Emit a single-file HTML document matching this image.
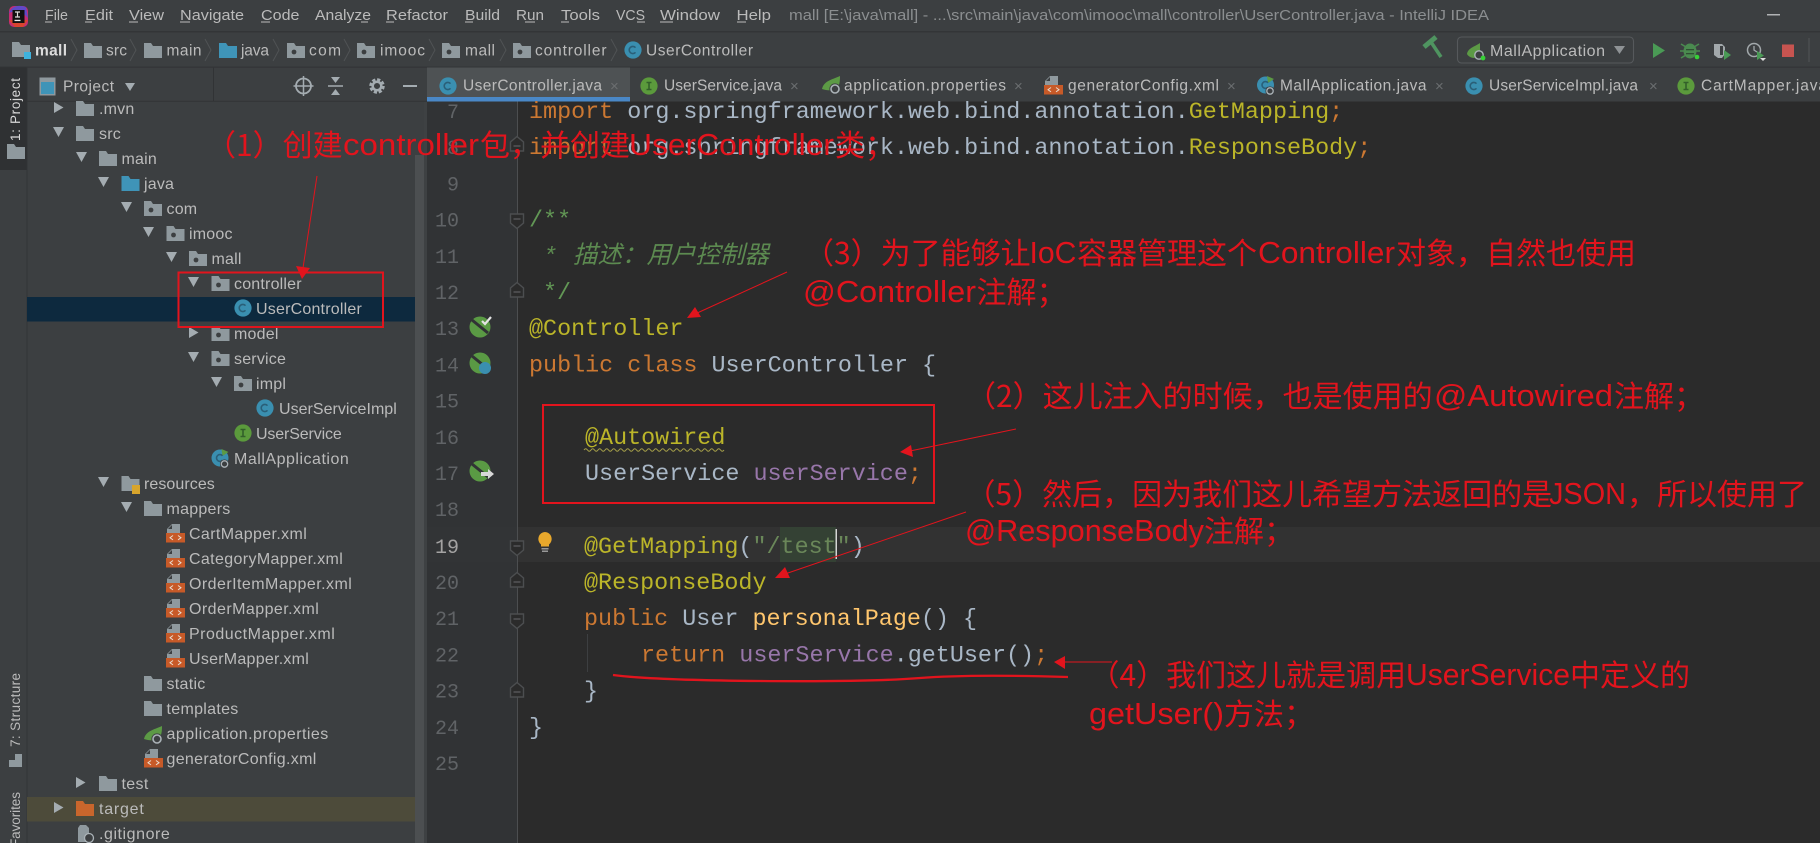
<!DOCTYPE html>
<html lang="zh"><head><meta charset="utf-8"><title>UserController.java - IntelliJ IDEA</title>
<style>
html,body{margin:0;padding:0;background:#2b2b2b;width:1820px;height:843px;overflow:hidden}
svg{display:block;filter:blur(.35px)}
text{white-space:pre}
.ui{font-family:"Liberation Sans",sans-serif;fill:#bbbbbb}
.m{font-size:15px}
.t{font-size:16px;letter-spacing:.2px}
.tab{font-size:15.5px}
.code{font-family:"Liberation Mono",monospace;font-size:23.4px;fill:#a9b7c6}
.ln{font-family:"Liberation Mono",monospace;font-size:20px;fill:#606366;text-anchor:end}
.k{fill:#cc7832}.a{fill:#bbb529}.c{fill:#629755}.s{fill:#6a8759}.f{fill:#9876aa}.h{fill:#ffc66d}
.r{font-family:"Noto Sans CJK SC","Liberation Sans",sans-serif;font-size:30px;fill:#e2141d}
.l{font-family:"Liberation Sans",sans-serif;font-size:31px;fill:#e2141d}
.x{font-size:15px;fill:#6b6e70}
</style></head><body>
<svg width="1820" height="843" viewBox="0 0 1820 843" xmlns="http://www.w3.org/2000/svg">
<defs>
<g id="fd"><path d="M0 1h7l2 3h9v12H0z" fill="#8f999e"/></g>
<g id="pk"><path d="M0 1h7l2 3h9v12H0z" fill="#8f999e"/><circle cx="7" cy="10" r="2.4" fill="#3c3f41"/></g>
<g id="bf"><path d="M0 1h7l2 3h9v12H0z" fill="#3f94b8"/></g>
<g id="of"><path d="M0 1h7l2 3h9v12H0z" fill="#c9662c"/></g>
<g id="cc"><circle cx="9" cy="9" r="8.6" fill="#3a8fb0"/><path d="M11.5 6.6A3.6 3.6 0 1 0 11.5 11.4" fill="none" stroke="#2a5f78" stroke-width="1.6"/></g>
<g id="ii"><circle cx="9" cy="9" r="8.6" fill="#5b9a3c"/><path d="M6.5 5.5h5M6.5 12.5h5M9 5.5v7" fill="none" stroke="#33602a" stroke-width="1.6"/></g>
<g id="xm"><path d="M6 0h8v9H1V5z" fill="#8f999e"/><path d="M6 1v4H2z" fill="#3c3f41"/><rect x="0" y="9" width="19" height="9.5" fill="#c75a28"/><path d="M7 11.5l-3 2.2 3 2.2M12 11.5l3 2.2-3 2.2" fill="none" stroke="#e8dcd0" stroke-width="1"/></g>
<g id="sp"><path d="M0 13C2 5 9 4 18 0c0 8-1 12-6 14-4 1-9 0-12-1z" fill="#5c9a45"/><circle cx="13" cy="13" r="5.6" fill="#3c3f41"/><circle cx="13" cy="13" r="4" fill="none" stroke="#aab2b7" stroke-width="1.6"/></g>
<g id="ma"><circle cx="8.5" cy="9" r="8.5" fill="#3a8fb0"/><path d="M10 0l7 3-6 4z" fill="#5c9a45"/><path d="M11 6.8A3.4 3.4 0 1 0 11 11.2" fill="none" stroke="#2a5f78" stroke-width="1.6"/><circle cx="13" cy="15" r="4.6" fill="#3c3f41"/><circle cx="13" cy="15" r="3.2" fill="none" stroke="#aab2b7" stroke-width="1.3"/></g>
<g id="fu"><path d="M-6.5-5V4L0 9.5 6.5 4V-5z" fill="#2b2b2b" stroke="#4c4e50" stroke-width="1.4"/><path d="M-3.5 0h7" stroke="#5a5c5e" stroke-width="1.3"/></g>
<g id="fe"><path d="M-6.5 5V-4L0-9.5 6.5-4V5z" fill="#2b2b2b" stroke="#4c4e50" stroke-width="1.4"/><path d="M-3.5 0h7" stroke="#5a5c5e" stroke-width="1.3"/></g>
<path id="td" d="M0 0h11L5.5 10z" fill="#a4acb1"/>
<path id="tr" d="M0 0v11L9.5 5.5z" fill="#a4acb1"/>
</defs>

<!-- base -->
<rect width="1820" height="843" fill="#3c3f41"/>
<rect x="0" y="31" width="1820" height="1.5" fill="#333537"/>
<rect x="0" y="66.5" width="1820" height="1.2" fill="#323436"/>
<!-- logo -->
<rect x="9" y="6" width="19" height="21" rx="5" fill="#c62d72"/><path d="M9 13Q13 3 26 7L28 18Q20 8 9 13z" fill="#5f49c9"/><path d="M9 20l6 7h8l5-7z" fill="#d9452e"/><rect x="12.5" y="10" width="12" height="13" fill="#111"/><rect x="14.500" y="19.800" width="6" height="1.300" fill="#eee"/><path d="M15 12h5M17.500 12v5M15 17h5" stroke="#ddd" stroke-width="1.200"/>
<!-- menu -->
<g class="ui m">
<text x="45" y="20" textLength="23" lengthAdjust="spacingAndGlyphs">File</text><text x="85" y="20" textLength="28" lengthAdjust="spacingAndGlyphs">Edit</text><text x="129" y="20" textLength="35" lengthAdjust="spacingAndGlyphs">View</text><text x="180" y="20" textLength="64" lengthAdjust="spacingAndGlyphs">Navigate</text><text x="261" y="20" textLength="38.500" lengthAdjust="spacingAndGlyphs">Code</text><text x="315" y="20" textLength="56" lengthAdjust="spacingAndGlyphs">Analyze</text><text x="386" y="20" textLength="62" lengthAdjust="spacingAndGlyphs">Refactor</text><text x="465" y="20" textLength="35" lengthAdjust="spacingAndGlyphs">Build</text><text x="516" y="20" textLength="28" lengthAdjust="spacingAndGlyphs">Run</text><text x="561" y="20" textLength="39" lengthAdjust="spacingAndGlyphs">Tools</text><text x="616" y="20" textLength="29" lengthAdjust="spacingAndGlyphs">VCS</text><text x="660" y="20" textLength="60" lengthAdjust="spacingAndGlyphs">Window</text><text x="736.500" y="20" textLength="34.500" lengthAdjust="spacingAndGlyphs">Help</text>
</g>
<path d="M45 22h7M85 22h7M129 22h9M180 22h10M261 22h9M361 22h7M386 22h8M465 22h8M525 22h10M561 22h8M637 22h8M660 22h13M737 22h9" stroke="#bbb" stroke-width="1"/>
<text class="ui" x="789" y="20" font-size="14.500" textLength="700" lengthAdjust="spacingAndGlyphs" style="fill:#8b8e90">mall [E:\java\mall] - ...\src\main\java\com\imooc\mall\controller\UserController.java - IntelliJ IDEA</text>
<rect x="1767" y="14" width="13" height="1.500" fill="#b0b2b4"/>

<!-- breadcrumb -->
<use href="#fd" x="12" y="41"/><rect x="24" y="52" width="7" height="7" fill="#3fb2dd"/>
<text class="ui" x="35" y="55.500" font-size="15.500" font-weight="bold" textLength="32" style="fill:#dcdcdc">mall</text>
<use href="#fd" x="84" y="42"/><text class="ui" x="106" y="55.500" font-size="15.500" textLength="21">src</text>
<use href="#fd" x="144" y="42"/><text class="ui" x="166.500" y="55.500" font-size="15.500" textLength="35">main</text>
<use href="#bf" x="219" y="42"/><text class="ui" x="241" y="55.500" font-size="15.500" textLength="28">java</text>
<use href="#pk" x="287" y="42"/><text class="ui" x="309" y="55.500" font-size="15.500" textLength="32">com</text>
<use href="#pk" x="357" y="42"/><text class="ui" x="380" y="55.500" font-size="15.500" textLength="45">imooc</text>
<use href="#pk" x="442" y="42"/><text class="ui" x="465" y="55.500" font-size="15.500" textLength="30">mall</text>
<use href="#pk" x="513" y="42"/><text class="ui" x="535" y="55.500" font-size="15.500" textLength="71.500">controller</text>
<use href="#cc" x="624" y="41"/><text class="ui" x="646" y="55.500" font-size="15.500" textLength="107">UserController</text>
<path d="M71 39l6 11-6 11M130 39l6 11-6 11M205 39l6 11-6 11M273 39l6 11-6 11M344 39l6 11-6 11M429 39l6 11-6 11M500 39l6 11-6 11M611 39l6 11-6 11" fill="none" stroke="#505355" stroke-width="1"/>

<!-- toolbar -->
<path d="M1431 42L1441 57" stroke="#4f9460" stroke-width="3.500"/><path d="M1424 47L1436 37" stroke="#4f9460" stroke-width="5"/>
<rect x="1457.500" y="37" width="176" height="26" rx="4" fill="none" stroke="#56595c" stroke-width="1.100"/>
<path d="M1467 54c1-6 7-7 13-11v8c-1 5-3 6-6 7-3 0-6-2-7-4z" fill="#5c9a45"/><circle cx="1479" cy="55" r="4.200" fill="#3c3f41" stroke="#aab2b7" stroke-width="1.400"/><circle cx="1483" cy="58" r="2.400" fill="#37d137"/>
<text class="ui" x="1490" y="56" font-size="16" textLength="115">MallApplication</text>
<path d="M1614 46h11l-5.500 8z" fill="#8e9295"/>
<path d="M1653 43v15l12-7.500z" fill="#4a9a55"/>
<ellipse cx="1690" cy="51" rx="6.500" ry="7.500" fill="#4a8a4f"/><path d="M1681 44l5 3M1699 44l-5 3M1680 51h5M1700 51h-5M1681 58l5-3M1699 58l-5-3" stroke="#4a8a4f" stroke-width="1.600"/><rect x="1686" y="49" width="8" height="1.300" fill="#2f4f32"/><rect x="1686" y="53" width="8" height="1.300" fill="#2f4f32"/><circle cx="1697" cy="57" r="2.300" fill="#37d137"/>
<path d="M1714 44h8l3 3v7l-3 4h-4l-4-3z" fill="#a2a8ab"/><path d="M1720 46h3v9h-3z" fill="#3c3f41"/><path d="M1724 50v10l7-5z" fill="#4a9a55"/>
<circle cx="1754" cy="50" r="6.500" fill="none" stroke="#a2a8ab" stroke-width="1.500"/><path d="M1754 46v4l3 2" fill="none" stroke="#a2a8ab" stroke-width="1.300"/><path d="M1757 51v9l7-4.500z" fill="#4a9a55"/><path d="M1760 58h6l-3 3z" fill="#ddd"/>
<rect x="1782" y="44.500" width="12" height="12.500" fill="#c75450"/>
<rect x="1808.500" y="38" width="1" height="24" fill="#525456"/>

<!-- sidebar -->
<rect x="0" y="67.500" width="27" height="775.500" fill="#3c3f41"/>
<rect x="0" y="67.500" width="27" height="102.500" fill="#2f3133"/>
<rect x="26.500" y="67.500" width="1" height="776" fill="#323436"/>
<text class="ui" transform="translate(20 141) rotate(-90)" font-size="13.500" textLength="63" style="fill:#d8d8d8">1: Project</text>
<use href="#fd" x="7" y="143"/>
<text class="ui" transform="translate(20 747) rotate(-90)" font-size="13.500" textLength="74">7: Structure</text>
<path d="M9 760h6v-6h7v6 1 6H9z" fill="#8f999e"/>
<text class="ui" transform="translate(20 847) rotate(-90)" font-size="13.500" textLength="55">Favorites</text>

<!-- project header -->
<rect x="39.500" y="77.500" width="16" height="18" fill="#8f999e"/><rect x="41" y="82" width="13" height="12" fill="#3f94b8"/>
<text class="ui" x="63" y="91.500" font-size="15.500" textLength="51">Project</text>
<path d="M125 83h10l-5 8z" fill="#a4acb1"/>
<circle cx="303.500" cy="86" r="7.500" fill="none" stroke="#a4acb1" stroke-width="1.800"/><path d="M303.500 76v20M293.500 86h20" stroke="#a4acb1" stroke-width="1.500"/>
<path d="M328 86h15" stroke="#a4acb1" stroke-width="1.500"/><path d="M331 77h9l-4.500 6zM331 95h9l-4.500-6z" fill="#a4acb1"/>
<circle cx="377" cy="86" r="6" fill="none" stroke="#a4acb1" stroke-width="3.500" stroke-dasharray="3 1.700"/><circle cx="377" cy="86" r="4.300" fill="none" stroke="#a4acb1" stroke-width="2.500"/>
<rect x="403" y="85" width="14" height="2" fill="#a4acb1"/>
<rect x="213" y="67.500" width="1" height="33.500" fill="#313335"/>
<rect x="27" y="100.800" width="400" height="1" fill="#323436"/>

<!-- tree -->
<rect x="27" y="297" width="398" height="24.500" fill="#0d293e"/>
<rect x="27" y="797" width="398" height="24.500" fill="#4d4b3a"/>
<rect x="415" y="155" width="9" height="688" fill="#4c4f51"/>
<rect x="424" y="102" width="3.500" height="741" fill="#3e4143"/>

<g transform="translate(0 -1)">
<use href="#tr" x="54" y="103"/><use href="#fd" x="76" y="101"/><text class="ui t" x="99" y="115">.mvn</text>
<use href="#td" x="53" y="128"/><use href="#fd" x="76" y="126"/><text class="ui t" x="99" y="140">src</text>
<use href="#td" x="76" y="153"/><use href="#fd" x="99" y="151"/><text class="ui t" x="121.500" y="165">main</text>
<use href="#td" x="98" y="178"/><use href="#bf" x="121.500" y="176"/><text class="ui t" x="144" y="190">java</text>
<use href="#td" x="121" y="203"/><use href="#pk" x="144" y="201"/><text class="ui t" x="166.500" y="215">com</text>
<use href="#td" x="143" y="228"/><use href="#pk" x="166.500" y="226"/><text class="ui t" x="189" y="240">imooc</text>
<use href="#td" x="166" y="253"/><use href="#pk" x="189" y="251"/><text class="ui t" x="211.500" y="265">mall</text>
<use href="#td" x="188" y="278"/><use href="#pk" x="211.500" y="276"/><text class="ui t" x="234" y="290">controller</text>
<use href="#cc" x="234" y="300"/><text class="ui t" x="256" y="315" textLength="106">UserController</text>
<use href="#tr" x="189" y="328"/><use href="#pk" x="211.500" y="326"/><text class="ui t" x="234" y="340">model</text>
<use href="#td" x="188" y="353"/><use href="#pk" x="211.500" y="351"/><text class="ui t" x="234" y="365">service</text>
<use href="#td" x="211" y="378"/><use href="#pk" x="234" y="376"/><text class="ui t" x="256" y="390">impl</text>
<use href="#cc" x="256" y="400"/><text class="ui t" x="279" y="415" textLength="118">UserServiceImpl</text>
<use href="#ii" x="234" y="425"/><text class="ui t" x="256" y="440" textLength="86">UserService</text>
<use href="#ma" x="211.500" y="450"/><text class="ui t" x="234" y="465" textLength="115">MallApplication</text>
<use href="#td" x="98" y="478"/><use href="#fd" x="121.500" y="476"/><rect x="132" y="486" width="8" height="9" fill="#d8a52c"/><text class="ui t" x="144" y="490" textLength="71">resources</text>
<use href="#td" x="121" y="503"/><use href="#fd" x="144" y="501"/><text class="ui t" x="166.500" y="515" textLength="64">mappers</text>
<use href="#xm" x="166" y="525"/><text class="ui t" x="189" y="540" textLength="118">CartMapper.xml</text>
<use href="#xm" x="166" y="550"/><text class="ui t" x="189" y="565" textLength="154">CategoryMapper.xml</text>
<use href="#xm" x="166" y="575"/><text class="ui t" x="189" y="590" textLength="163">OrderItemMapper.xml</text>
<use href="#xm" x="166" y="600"/><text class="ui t" x="189" y="615" textLength="130">OrderMapper.xml</text>
<use href="#xm" x="166" y="625"/><text class="ui t" x="189" y="640" textLength="146">ProductMapper.xml</text>
<use href="#xm" x="166" y="650"/><text class="ui t" x="189" y="665" textLength="120">UserMapper.xml</text>
<use href="#fd" x="144" y="676"/><text class="ui t" x="166.500" y="690" textLength="39">static</text>
<use href="#fd" x="144" y="701"/><text class="ui t" x="166.500" y="715" textLength="72">templates</text>
<use href="#sp" x="144" y="727"/><text class="ui t" x="166.500" y="740" textLength="162">application.properties</text>
<use href="#xm" x="144" y="750"/><text class="ui t" x="166.500" y="765" textLength="150">generatorConfig.xml</text>
<use href="#tr" x="76" y="778"/><use href="#fd" x="99" y="776"/><text class="ui t" x="121.500" y="790" textLength="27">test</text>
<use href="#tr" x="54" y="803"/><use href="#of" x="76" y="801"/><text class="ui t" x="99" y="815" textLength="45">target</text>
<path d="M80 826h6l3 3v14h-11v-14z" fill="#8f999e"/><circle cx="89" cy="839" r="4.500" fill="#3c3f41" stroke="#aab2b7" stroke-width="1.300"/><text class="ui t" x="99" y="840" textLength="71">.gitignore</text>
</g>

<!-- tabs -->
<rect x="427" y="67.500" width="203" height="30" fill="#4e5254"/>
<rect x="427" y="97" width="203" height="4.500" fill="#4a88c7"/>
<use href="#cc" x="439" y="77"/><text class="ui tab" x="463" y="90.500" textLength="139">UserController.java</text><text class="ui x" x="610" y="91">×</text>
<use href="#ii" x="640" y="77"/><text class="ui tab" x="664" y="90.500" textLength="118">UserService.java</text><text class="ui x" x="790" y="91">×</text>
<use href="#sp" x="822" y="76"/><text class="ui tab" x="844" y="90.500" textLength="162">application.properties</text><text class="ui x" x="1014" y="91">×</text>
<use href="#xm" x="1044" y="76"/><text class="ui tab" x="1068" y="90.500" textLength="151">generatorConfig.xml</text><text class="ui x" x="1227" y="91">×</text>
<use href="#ma" x="1257" y="76"/><text class="ui tab" x="1280" y="90.500" textLength="146.500">MallApplication.java</text><text class="ui x" x="1435" y="91">×</text>
<use href="#cc" x="1465" y="77"/><text class="ui tab" x="1489" y="90.500" textLength="149">UserServiceImpl.java</text><text class="ui x" x="1649" y="91">×</text>
<use href="#ii" x="1677" y="77"/><text class="ui tab" x="1701" y="90.500" textLength="126">CartMapper.java</text>

<!-- editor -->
<rect x="427" y="101.500" width="91" height="742" fill="#313335"/>
<rect x="518" y="101.500" width="1302" height="742" fill="#2b2b2b"/>
<rect x="427" y="527" width="91" height="35" fill="#323436"/>
<rect x="518" y="527" width="1302" height="35" fill="#323232"/>
<rect x="517" y="101.500" width="1" height="742" fill="#4c4e50"/>
<rect x="780" y="527" width="56" height="35" fill="#344134"/>
<rect x="835.500" y="529" width="1.500" height="30" fill="#d5d5d5"/>
<rect x="587" y="634" width="1" height="38" fill="#3d3f41"/>

<text class="ln" x="459" y="118">7</text>
<text class="ln" x="459" y="154">8</text>
<text class="ln" x="459" y="190.500">9</text>
<text class="ln" x="459" y="226.500">10</text>
<text class="ln" x="459" y="263">11</text>
<text class="ln" x="459" y="299">12</text>
<text class="ln" x="459" y="335">13</text>
<text class="ln" x="459" y="371.500">14</text>
<text class="ln" x="459" y="407.500">15</text>
<text class="ln" x="459" y="444">16</text>
<text class="ln" x="459" y="480">17</text>
<text class="ln" x="459" y="516">18</text>
<text class="ln" x="459" y="553" style="fill:#a4a3a3">19</text>
<text class="ln" x="459" y="589">20</text>
<text class="ln" x="459" y="625">21</text>
<text class="ln" x="459" y="661.500">22</text>
<text class="ln" x="459" y="697.500">23</text>
<text class="ln" x="459" y="734">24</text>
<text class="ln" x="459" y="770">25</text>

<use href="#fe" x="517" y="146"/><use href="#fu" x="517" y="219"/><use href="#fe" x="517" y="292"/>
<use href="#fu" x="517" y="546"/><use href="#fe" x="517" y="582"/><use href="#fu" x="517" y="619"/><use href="#fe" x="517" y="692"/>

<!-- gutter icons -->
<circle cx="480" cy="327" r="10.500" fill="#5a9a44"/><path d="M472 320l16 13" stroke="#313335" stroke-width="3"/><path d="M482 321l3 3 6-7" fill="none" stroke="#e4e4e4" stroke-width="2.200"/>
<circle cx="480" cy="363" r="10.500" fill="#5a9a44"/><path d="M472 356l16 13" stroke="#313335" stroke-width="3"/><circle cx="485" cy="368" r="6" fill="#3a8fb0"/>
<circle cx="480" cy="471" r="10.500" fill="#5a9a44"/><path d="M472 464l16 13" stroke="#313335" stroke-width="3"/><path d="M481 472h7v-3l6 5-6 5v-3h-7z" fill="#d8d8d8"/>
<path d="M545 532a7 7 0 0 1 4 12.500v2h-8v-2a7 7 0 0 1 4-12.500z" fill="#e8a82c"/><rect x="541.500" y="548" width="7" height="1.500" fill="#999"/><rect x="542" y="550.500" width="6" height="1.500" fill="#999"/>

<!-- code -->
<text class="code" x="529" y="118"><tspan class="k">import</tspan> org.springframework.web.bind.annotation.<tspan class="a">GetMapping</tspan><tspan class="k">;</tspan></text>
<text class="code" x="529" y="154"><tspan class="k">import</tspan> org.springframework.web.bind.annotation.<tspan class="a">ResponseBody</tspan><tspan class="k">;</tspan></text>
<text class="code c" x="529" y="226.500" style="fill:#629755">/**</text>
<text class="code" x="543" y="263" style="fill:#5c8a50;font-style:italic">*</text>
<text x="573" y="263" font-family="'Noto Sans CJK SC',sans-serif" font-size="24.500" font-style="italic" fill="#5c8a50">描述：用户控制器</text>
<text class="code" x="543" y="299" style="fill:#629755">*/</text>
<text class="code" x="529" y="335" style="fill:#bbb529">@Controller</text>
<text class="code" x="529" y="371.500"><tspan class="k">public class</tspan> UserController {</text>
<text class="code" x="585" y="444" style="fill:#bbb529">@Autowired</text>
<path d="M584 450q1.700-2.500 3.500 0t3.500 0 3.500 0 3.500 0 3.500 0 3.500 0 3.500 0 3.500 0 3.500 0 3.500 0 3.500 0 3.500 0 3.500 0 3.500 0 3.500 0 3.500 0 3.500 0 3.500 0 3.500 0 3.500 0 3.500 0 3.500 0 3.500 0 3.500 0 3.500 0 3.500 0 3.500 0 3.500 0 3.500 0 3.500 0 3.500 0 3.500 0 3.500 0 3.500 0 3.500 0 3.500 0 3.500 0 3.500 0 3.500 0 3.500 0" fill="none" stroke="#a8a24a" stroke-width="1"/>
<text class="code" x="585" y="480">UserService <tspan class="f">userService</tspan><tspan class="k">;</tspan></text>
<text class="code" x="584" y="553"><tspan class="a">@GetMapping</tspan>(<tspan class="s">"/test"</tspan>)</text>
<text class="code" x="584" y="589" style="fill:#bbb529">@ResponseBody</text>
<text class="code" x="584" y="625"><tspan class="k">public</tspan> User <tspan class="h">personalPage</tspan>() {</text>
<text class="code" x="641" y="661.500"><tspan class="k">return</tspan> <tspan class="f">userService</tspan>.getUser()<tspan class="k">;</tspan></text>
<text class="code" x="584" y="697.500">}</text>
<text class="code" x="529" y="734">}</text>

<!-- annotations -->
<g fill="none" stroke="#e2141d">
<rect x="178.500" y="272.500" width="204.500" height="54.500" stroke-width="2"/>
<rect x="543" y="405" width="391" height="98" stroke-width="2"/>
<path d="M317 176L303 268" stroke-width="1"/>
<path d="M787 272L695 314" stroke-width="1"/>
<path d="M1016 429L910 451" stroke-width="1"/>
<path d="M966 512L785 574" stroke-width="1"/>
<path d="M1112 662L1062 662" stroke-width="1"/>
<path d="M613 675Q650 680 760 681T920 678T1068 677" stroke-width="2.300"/>
</g>
<g fill="#e2141d">
<path d="M296 266l14 2-8 11z"/>
<path d="M687 318l8-11 6 10z"/>
<path d="M900 452l11-7 2 12z"/>
<path d="M775 578l10-11 5 11z"/>
<path d="M1054 662l11-6v13z"/>
</g>

<text class="r" x="206" y="156">（1）创建</text>
<text class="l" x="343" y="155" textLength="136" lengthAdjust="spacingAndGlyphs">controller</text>
<text class="r" x="480" y="156">包，并创建</text>
<text class="l" x="629" y="155" textLength="205" lengthAdjust="spacingAndGlyphs">UserController</text>
<text class="r" x="835" y="156">类；</text>

<text class="r" x="804" y="264">（3）为了能够让</text>
<text class="l" x="1029.500" y="263" textLength="47" lengthAdjust="spacingAndGlyphs">IoC</text>
<text class="r" x="1077" y="264">容器管理这个</text>
<text class="l" x="1258" y="263" textLength="137" lengthAdjust="spacingAndGlyphs">Controller</text>
<text class="r" x="1396" y="264">对象，自然也使用</text>

<text class="l" x="803" y="302" textLength="173" lengthAdjust="spacingAndGlyphs">@Controller</text>
<text class="r" x="976.500" y="303">注解；</text>

<text class="r" x="966" y="407">（2）这儿注入的时候，也是使用的</text>
<text class="l" x="1434" y="406" textLength="179" lengthAdjust="spacingAndGlyphs">@Autowired</text>
<text class="r" x="1614" y="407">注解；</text>

<text class="r" x="965.500" y="505">（5）然后，因为我们这儿希望方法返回的是</text>
<text class="l" x="1549" y="504" textLength="77" lengthAdjust="spacingAndGlyphs">JSON</text>
<text class="r" x="1627" y="505">，所以使用了</text>

<text class="l" x="965" y="541" textLength="239" lengthAdjust="spacingAndGlyphs">@ResponseBody</text>
<text class="r" x="1204" y="542">注解；</text>

<text class="r" x="1089.500" y="686">（4）我们这儿就是调用</text>
<text class="l" x="1406" y="685" textLength="164" lengthAdjust="spacingAndGlyphs">UserService</text>
<text class="r" x="1570" y="686">中定义的</text>

<text class="l" x="1089" y="724" textLength="135" lengthAdjust="spacingAndGlyphs">getUser()</text>
<text class="r" x="1224" y="725">方法；</text>
</svg>
</body></html>
